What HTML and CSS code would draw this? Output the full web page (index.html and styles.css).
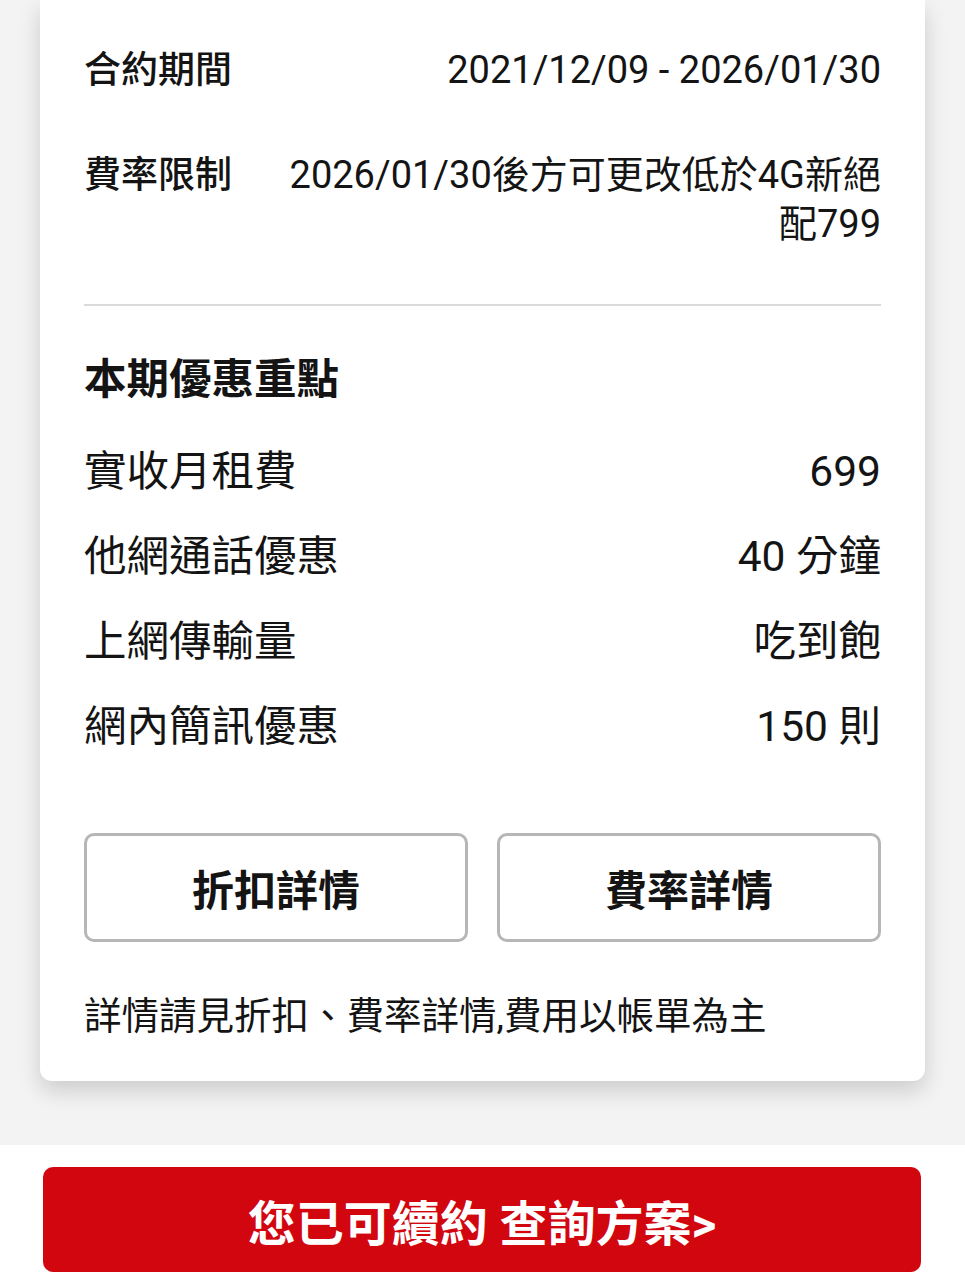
FILE: index.html
```html
<!DOCTYPE html>
<html lang="zh-Hant">
<head>
  <meta charset="UTF-8" />
  <title>合約資訊</title>
  <link rel="stylesheet" href="styles.css">
</head>
<body>
  <div class="card-wrap">
    <div class="card">
      <div class="info-row">
        <div class="info-label">合約期間</div>
        <div class="info-value">2021/12/09 - 2026/01/30</div>
      </div>
      <div class="info-row">
        <div class="info-label">費率限制</div>
        <div class="info-value">2026/01/30後方可更改低於4G新絕配799</div>
      </div>

      <hr class="divider">

      <h3 class="section-title">本期優惠重點</h3>
      <ul class="perk-list">
        <li><span>實收月租費</span><span>699</span></li>
        <li><span>他網通話優惠</span><span>40 分鐘</span></li>
        <li><span>上網傳輸量</span><span>吃到飽</span></li>
        <li><span>網內簡訊優惠</span><span>150 則</span></li>
      </ul>

      <div class="btn-group">
        <button class="outline-btn">折扣詳情</button>
        <button class="outline-btn">費率詳情</button>
      </div>

      <p class="note">詳情請見折扣、費率詳情,費用以帳單為主</p>
    </div>
  </div>

  <div class="footer">
    <button class="renew-btn">您已可續約 查詢方案&gt;</button>
  </div>
</body>
</html>
```

FILE: styles.css
```css
body {
  margin: 0;
  background: #f3f3f3;
  font-family: Roboto, "Noto Sans CJK TC", sans-serif;
  color: #141414;
}
.card-wrap {
  padding: 0 40px 32px 40px;
  margin-bottom: 32px;
  overflow: hidden;
}
.card {
  background: #fff;
  border-radius: 0 0 12px 12px;
  padding: 46px 44px 40px 44px;
  box-shadow: 0 10px 22px rgba(0,0,0,0.16);
}
.info-row {
  display: flex;
  justify-content: space-between;
  font-size: 37px;
  line-height: 50px;
  margin-bottom: 55px;
}
.info-row:last-of-type {
  margin-bottom: 0;
}
.info-label {
  flex-shrink: 0;
  font-weight: 500;
}
.info-value {
  margin-left: 55px;
  font-size: 38px;
  line-height: 49px;
  text-align: right;
}
.divider {
  border: none;
  border-top: 2px solid #dadada;
  margin: 40px 0 0 0;
}
.section-title {
  margin: 49px 0 0 0;
  font-size: 42.5px;
  line-height: 50px;
  font-weight: 700;
}
.perk-list {
  list-style: none;
  margin: 42px 0 0 0;
  padding: 0;
  display: flex;
  flex-direction: column;
  gap: 35px;
}
.perk-list li {
  display: flex;
  justify-content: space-between;
  font-size: 42.5px;
  line-height: 50px;
}
.btn-group {
  display: flex;
  gap: 29px;
  margin-top: 81px;
}
.outline-btn {
  flex: 1;
  height: 109px;
  background: #fff;
  border: 3px solid #b6b6b6;
  border-radius: 10px;
  font-family: inherit;
  font-size: 42px;
  font-weight: 700;
  color: #141414;
  cursor: pointer;
}
.note {
  margin: 49px 0 0 0;
  font-size: 37.5px;
  line-height: 50px;
}
.footer {
  background: #fff;
  padding: 22px 44px 10px 43px;
}
.renew-btn {
  display: block;
  width: 100%;
  height: 105px;
  border: none;
  border-radius: 10px;
  background: #d2060f;
  color: #fff;
  font-family: inherit;
  font-size: 48px;
  font-weight: 700;
  cursor: pointer;
}
```
